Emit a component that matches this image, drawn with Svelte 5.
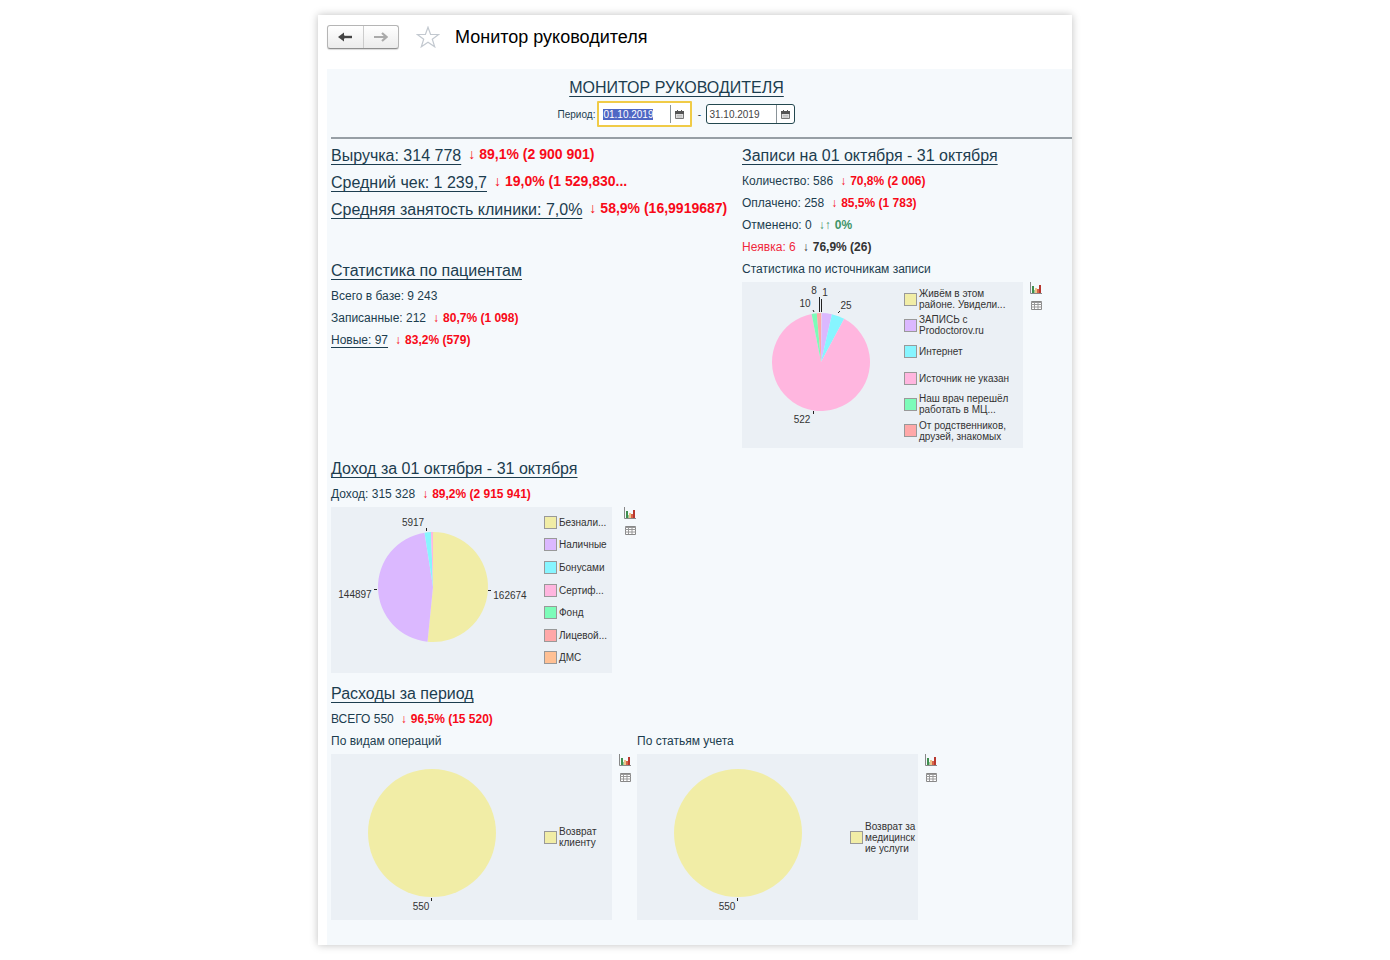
<script>
  import { onMount } from "svelte";

  let from = "01.10.2019";
  let to = "31.10.2019";
  let fromInput;

  const colors = {
    yellow: "#f1eda6",
    violet: "#dbb8ff",
    cyan: "#87f5ff",
    pink: "#ffb6df",
    green: "#7dfcb9",
    red: "#ffa8a8",
    orange: "#ffc094"
  };

  const totals = [
    { title: "Выручка: 314 778", delta: "89,1% (2 900 901)" },
    { title: "Средний чек: 1 239,7", delta: "19,0% (1 529,830..." },
    { title: "Средняя занятость клиники: 7,0%", delta: "58,9% (16,9919687)" }
  ];

  const patients = [
    { title: "Всего в базе: 9 243" },
    { title: "Записанные: 212", delta: "80,7% (1 098)" },
    { title: "Новые: 97", delta: "83,2% (579)", link: true }
  ];

  const visits = [
    { title: "Количество: 586", delta: "70,8% (2 006)" },
    { title: "Оплачено: 258", delta: "85,5% (1 783)" },
    { title: "Отменено: 0", delta: "0%", kind: "same" },
    { title: "Неявка: 6", delta: "76,9% (26)", kind: "dark", alert: true }
  ];

  const sources = {
    name: "Источники записи",
    width: 162, cx: 79, cy: 80, r: 49,
    items: [
      { label: "Живём в этом\nрайоне. Увидели...", value: 1, color: colors.yellow },
      { label: "ЗАПИСЬ с\nProdoctorov.ru", value: 20, color: colors.violet },
      { label: "Интернет", value: 25, color: colors.cyan },
      { label: "Источник не указан", value: 522, color: colors.pink },
      { label: "Наш врач перешёл\nработать в МЦ...", value: 10, color: colors.green },
      { label: "От родственников,\nдрузей, знакомых", value: 8, color: colors.red }
    ],
    marks: [
      { text: "8", x: 72, y: 12, line: "M77.5 15v15" },
      { text: "1", x: 83, y: 14, line: "M79.5 17v13" },
      { text: "10", x: 63, y: 25, line: "M71 28l1 2" },
      { text: "25", x: 104, y: 27, line: "M98 29l-2 2" },
      { text: "522", x: 60, y: 141, line: "M71.5 129v3" }
    ]
  };

  const income = {
    name: "Доход",
    width: 213, cx: 102, cy: 80, r: 55,
    items: [
      { label: "Безнали...", value: 162674, color: colors.yellow },
      { label: "Наличные", value: 144897, color: colors.violet },
      { label: "Бонусами", value: 5917, color: colors.cyan },
      { label: "Сертиф...", value: 1840, color: colors.pink },
      { label: "Фонд", value: 0, color: colors.green },
      { label: "Лицевой...", value: 0, color: colors.red },
      { label: "ДМС", value: 0, color: colors.orange }
    ],
    marks: [
      { text: "5917", x: 82, y: 19, line: "M95.5 21v3" },
      { text: "144897", x: 24, y: 91, line: "M43 82.5h3" },
      { text: "162674", x: 179, y: 92, line: "M157 83.5h3" }
    ]
  };

  const expenses = [
    { title: "По видам операций", label: "Возврат\nклиенту" },
    { title: "По статьям учета", label: "Возврат за\nмедицинск\nие услуги" }
  ].map(({ title, label }) => ({
    name: title,
    width: 213, cx: 101, cy: 79, r: 64,
    items: [{ label, value: 550, color: colors.yellow }],
    marks: [{ text: "550", x: 90, y: 156, line: "M100.5 144v3" }]
  }));

  function slices({ items, cx, cy, r }) {
    const total = items.reduce((sum, item) => sum + item.value, 0);
    const point = part => {
      const angle = part * 2 * Math.PI;
      return `${cx + r * Math.sin(angle)} ${cy - r * Math.cos(angle)}`;
    };
    let start = 0;
    return items.filter(item => item.value).map(item => {
      const end = start + item.value / total;
      const large = end - start > 0.5 ? 1 : 0;
      const d = `M${cx} ${cy}L${point(start)}A${r} ${r} 0 ${large} 1 ${point(end)}Z`;
      start = end;
      return { d, color: item.color };
    });
  }

  onMount(() => {
    fromInput.focus();
    fromInput.select();
  });
</script>

{#snippet delta(text, kind)}
  <strong class="delta {kind || ''}">
    <span class="arrow">{kind === "same" ? "↓↑" : "↓"}</span>{text}
  </strong>
{/snippet}

{#snippet row(item)}
  <p class="row" class:alert={item.alert}>
    {#if item.link}<a href="#details">{item.title}</a>{:else}<span>{item.title}</span>{/if}
    {#if item.delta}{@render delta(item.delta, item.kind)}{/if}
  </p>
{/snippet}

{#snippet calendar()}
  <svg width="9" height="9" viewBox="0 0 9 9">
    <path d="M.5 1.500h8v7h-8z" fill="#ddd" stroke="#777" />
    <path d="M0 1h9v3H0z" fill="#555" />
    <path d="M2.500 0v2M6.500 0v2" stroke="#555" />
    <path d="M2 5.500h5M2 7h5" stroke="#aaa" stroke-width=".6" />
  </svg>
{/snippet}

{#snippet chart(data)}
  <div class="chart">
    <div class="plot">
      <svg width={data.width} height="166" role="img" aria-label={data.name}>
        {#if data.items.length === 1}
          <circle cx={data.cx} cy={data.cy} r={data.r} fill={data.items[0].color} />
        {:else}
          {#each slices(data) as slice}
            <path d={slice.d} fill={slice.color} />
          {/each}
        {/if}
        {#each data.marks as mark}
          <path d={mark.line} stroke="#222" fill="none" />
          <text x={mark.x} y={mark.y}>{mark.text}</text>
        {/each}
      </svg>
      <ul class="legend">
        {#each data.items as item}
          <li><i style="background: {item.color}"></i><span>{item.label}</span></li>
        {/each}
      </ul>
    </div>
    <div class="tools">
      <button aria-label="Диаграмма">
        <svg width="12" height="12" viewBox="0 0 12 12">
          <path d="M.5 0v11.500H12" fill="none" stroke="#888" />
          <path d="M2 4h2v7H2z" fill="#3f8f4f" />
          <path d="M4 8h1v3H4z" fill="#9cc79c" />
          <path d="M5 6h2v5H5z" fill="#ecc48a" />
          <path d="M7 7h2v4H7z" fill="#d8664a" />
          <path d="M9 3h2v8H9z" fill="#b8382f" />
        </svg>
      </button>
      <button aria-label="Таблица">
        <svg width="12" height="10" viewBox="0 0 12 10">
          <path d="M1.500 .5h10v8h-10z" fill="#fff" stroke="#888" />
          <path d="M1 1.500h11M1 3.500h11M1 6h11M4.500 1v7M8 1v7" stroke="#999" />
        </svg>
      </button>
    </div>
  </div>
{/snippet}

<main class="window">
  <header class="topbar">
    <div class="nav">
      <button aria-label="Назад">
        <svg width="14" height="10" viewBox="0 0 14 10">
          <path d="M4 5h10" stroke="#444" stroke-width="2.400" />
          <path d="M6 .5v9L0 5z" fill="#444" />
          <path d="M6.500 3v4L5 5z" fill="#444" />
        </svg>
      </button>
      <button aria-label="Вперед">
        <svg width="14" height="10" viewBox="0 0 14 10">
          <path d="M0 5h12M8 1l4.500 4L8 9" fill="none" stroke="#aaa" stroke-width="2.200" />
        </svg>
      </button>
    </div>
    <button class="star" aria-label="В избранное">
      <svg width="24" height="22" viewBox="0 0 24 22">
        <path d="M12 1.200l2.600 7.300h8l-6.300 4.700 2.400 7.600L12 16.200l-6.700 4.600 2.400-7.600L1.400 8.500h8z" fill="#fff" stroke="#c3c9d0" stroke-width="1.200" />
      </svg>
    </button>
    <span class="name">Монитор руководителя</span>
  </header>

  <div class="panel">
    <div class="head">
      <h1><a href="#monitor">МОНИТОР РУКОВОДИТЕЛЯ</a></h1>
      <div class="period">
        <label for="from">Период:</label>
        <div class="date">
          <input id="from" type="text" bind:value={from} bind:this={fromInput} />
          <button aria-label="Выбрать начало">{@render calendar()}</button>
        </div>
        <label class="dash" for="to">-</label>
        <div class="date">
          <input id="to" type="text" bind:value={to} />
          <button aria-label="Выбрать конец">{@render calendar()}</button>
        </div>
      </div>
    </div>

    <div class="columns">
      <section>
        {#each totals as item}
          <p class="total">
            <a href="#details">{item.title}</a>
            {@render delta(item.delta)}
          </p>
        {/each}
        <h2 class="patients"><a href="#patients">Статистика по пациентам</a></h2>
        {#each patients as item}
          {@render row(item)}
        {/each}
      </section>
      <section>
        <h2><a href="#visits">Записи на 01 октября - 31 октября</a></h2>
        {#each visits as item}
          {@render row(item)}
        {/each}
        <p class="row">Статистика по источникам записи</p>
        {@render chart(sources)}
      </section>
    </div>

    <section class="block income">
      <h2><a href="#income">Доход за 01 октября - 31 октября</a></h2>
      {@render row({ title: "Доход: 315 328", delta: "89,2% (2 915 941)" })}
      {@render chart(income)}
    </section>

    <section class="block">
      <h2><a href="#expenses">Расходы за период</a></h2>
      {@render row({ title: "ВСЕГО 550", delta: "96,5% (15 520)" })}
      <div class="expenses">
        {#each expenses as item}
          <div>
            <p class="row">{item.name}</p>
            {@render chart(item)}
          </div>
        {/each}
      </div>
    </section>
  </div>
</main>

<style>
  :global(body) {
    background: #fff;
    font-family: "Liberation Sans", Arial, sans-serif;
  }
  .window {
    max-width: 754px;
    margin: 15px auto;
    background: #fff;
    box-shadow: 0 0 8px rgba(0, 0, 0, 0.25);
    color: #1c3d4f;
  }
  h1, h2, p, ul {
    margin: 0;
    padding: 0;
    font-weight: normal;
  }
  a {
    color: inherit;
    text-decoration: underline;
    text-decoration-thickness: 1px;
    text-decoration-skip-ink: none;
    text-underline-offset: 3px;
  }
  button {
    display: flex;
    align-items: center;
    justify-content: center;
    padding: 0;
    border: none;
    background: none;
    cursor: pointer;
  }
  .topbar {
    display: flex;
    align-items: center;
    padding: 9px 9px 19px;
  }
  .nav {
    display: flex;
    box-sizing: border-box;
    width: 72px;
    height: 24px;
    border: 1px solid #b5b5b5;
    border-bottom-color: #8f8f8f;
    border-radius: 3px;
    background: linear-gradient(#fff, #ececec);
    box-shadow: 0 1px 1px rgba(0, 0, 0, 0.15);
  }
  .nav button {
    flex: 1;
  }
  .nav button + button {
    border-left: 1px solid #ccc;
  }
  .star {
    margin: 0 15px 0 17px;
  }
  .name {
    font-size: 18px;
    line-height: 26px;
    color: #000;
  }
  .panel {
    margin-left: 9px;
    padding: 6px 0 25px 4px;
    background: #f5f9fc;
  }
  .head {
    padding: 0 50px 10px 0;
    border-bottom: 2px solid #979fa5;
    text-align: center;
  }
  h1 {
    font-size: 16px;
    line-height: 26px;
  }
  .period {
    display: flex;
    align-items: center;
    justify-content: center;
    height: 26px;
    font-size: 10px;
  }
  .period label:first-child {
    padding-right: 2px;
  }
  .dash {
    width: 14px;
  }
  .date {
    display: flex;
    box-sizing: border-box;
    width: 89px;
    height: 20px;
    border: 1px solid #23484f;
    border-radius: 3px;
    background: #fff;
  }
  .date:focus-within {
    width: 95px;
    height: 26px;
    padding: 2px;
    border: 2px solid #f0cb47;
    border-radius: 1px;
  }
  .date input {
    flex: 1;
    min-width: 0;
    padding: 0 2px;
    border: none;
    outline: none;
    background: none;
    font: inherit;
    color: #444;
  }
  .date input::selection {
    background: #4f67c4;
    color: #fff;
  }
  .date button {
    width: 18px;
    border-left: 1px solid #8a9499;
  }
  .columns {
    display: grid;
    grid-template-columns: 411fr 330fr;
    padding-top: 3px;
  }
  .total {
    display: flex;
    gap: 7px;
    font-size: 16px;
    line-height: 27px;
    white-space: nowrap;
  }
  h2 {
    font-size: 16px;
    line-height: 28px;
  }
  .patients {
    margin-top: 34px;
  }
  .row {
    display: flex;
    gap: 7px;
    font-size: 12px;
    line-height: 22px;
  }
  .alert {
    color: #f0283c;
  }
  .delta {
    display: flex;
    gap: 4px;
    font-size: 12px;
    color: #f80a18;
  }
  .total .delta {
    font-size: 14px;
    line-height: 25px;
  }
  .arrow {
    font-weight: normal;
  }
  .same {
    color: #3f9468;
  }
  .dark {
    color: #333;
  }
  .block {
    margin-top: 7px;
  }
  .chart {
    display: flex;
    gap: 7px;
    margin-top: 2px;
  }
  .income .chart {
    gap: 12px;
  }
  .plot {
    display: flex;
    width: 281px;
    background: #ebf0f5;
    font-size: 10px;
    color: #333;
  }
  .plot svg {
    flex: none;
  }
  text {
    font-size: 10px;
    fill: #333;
    text-anchor: middle;
  }
  .legend {
    display: flex;
    flex: 1;
    flex-direction: column;
    padding: 4px 0;
    line-height: 11px;
    list-style: none;
    white-space: pre;
  }
  .legend li {
    display: flex;
    flex: 1;
    align-items: center;
    gap: 2px;
  }
  .legend i {
    flex: none;
    box-sizing: border-box;
    width: 13px;
    height: 13px;
    border: 1px solid #999;
  }
  .tools {
    display: flex;
    flex-direction: column;
    gap: 7px;
  }
  .expenses {
    display: flex;
    gap: 6px;
  }
</style>
